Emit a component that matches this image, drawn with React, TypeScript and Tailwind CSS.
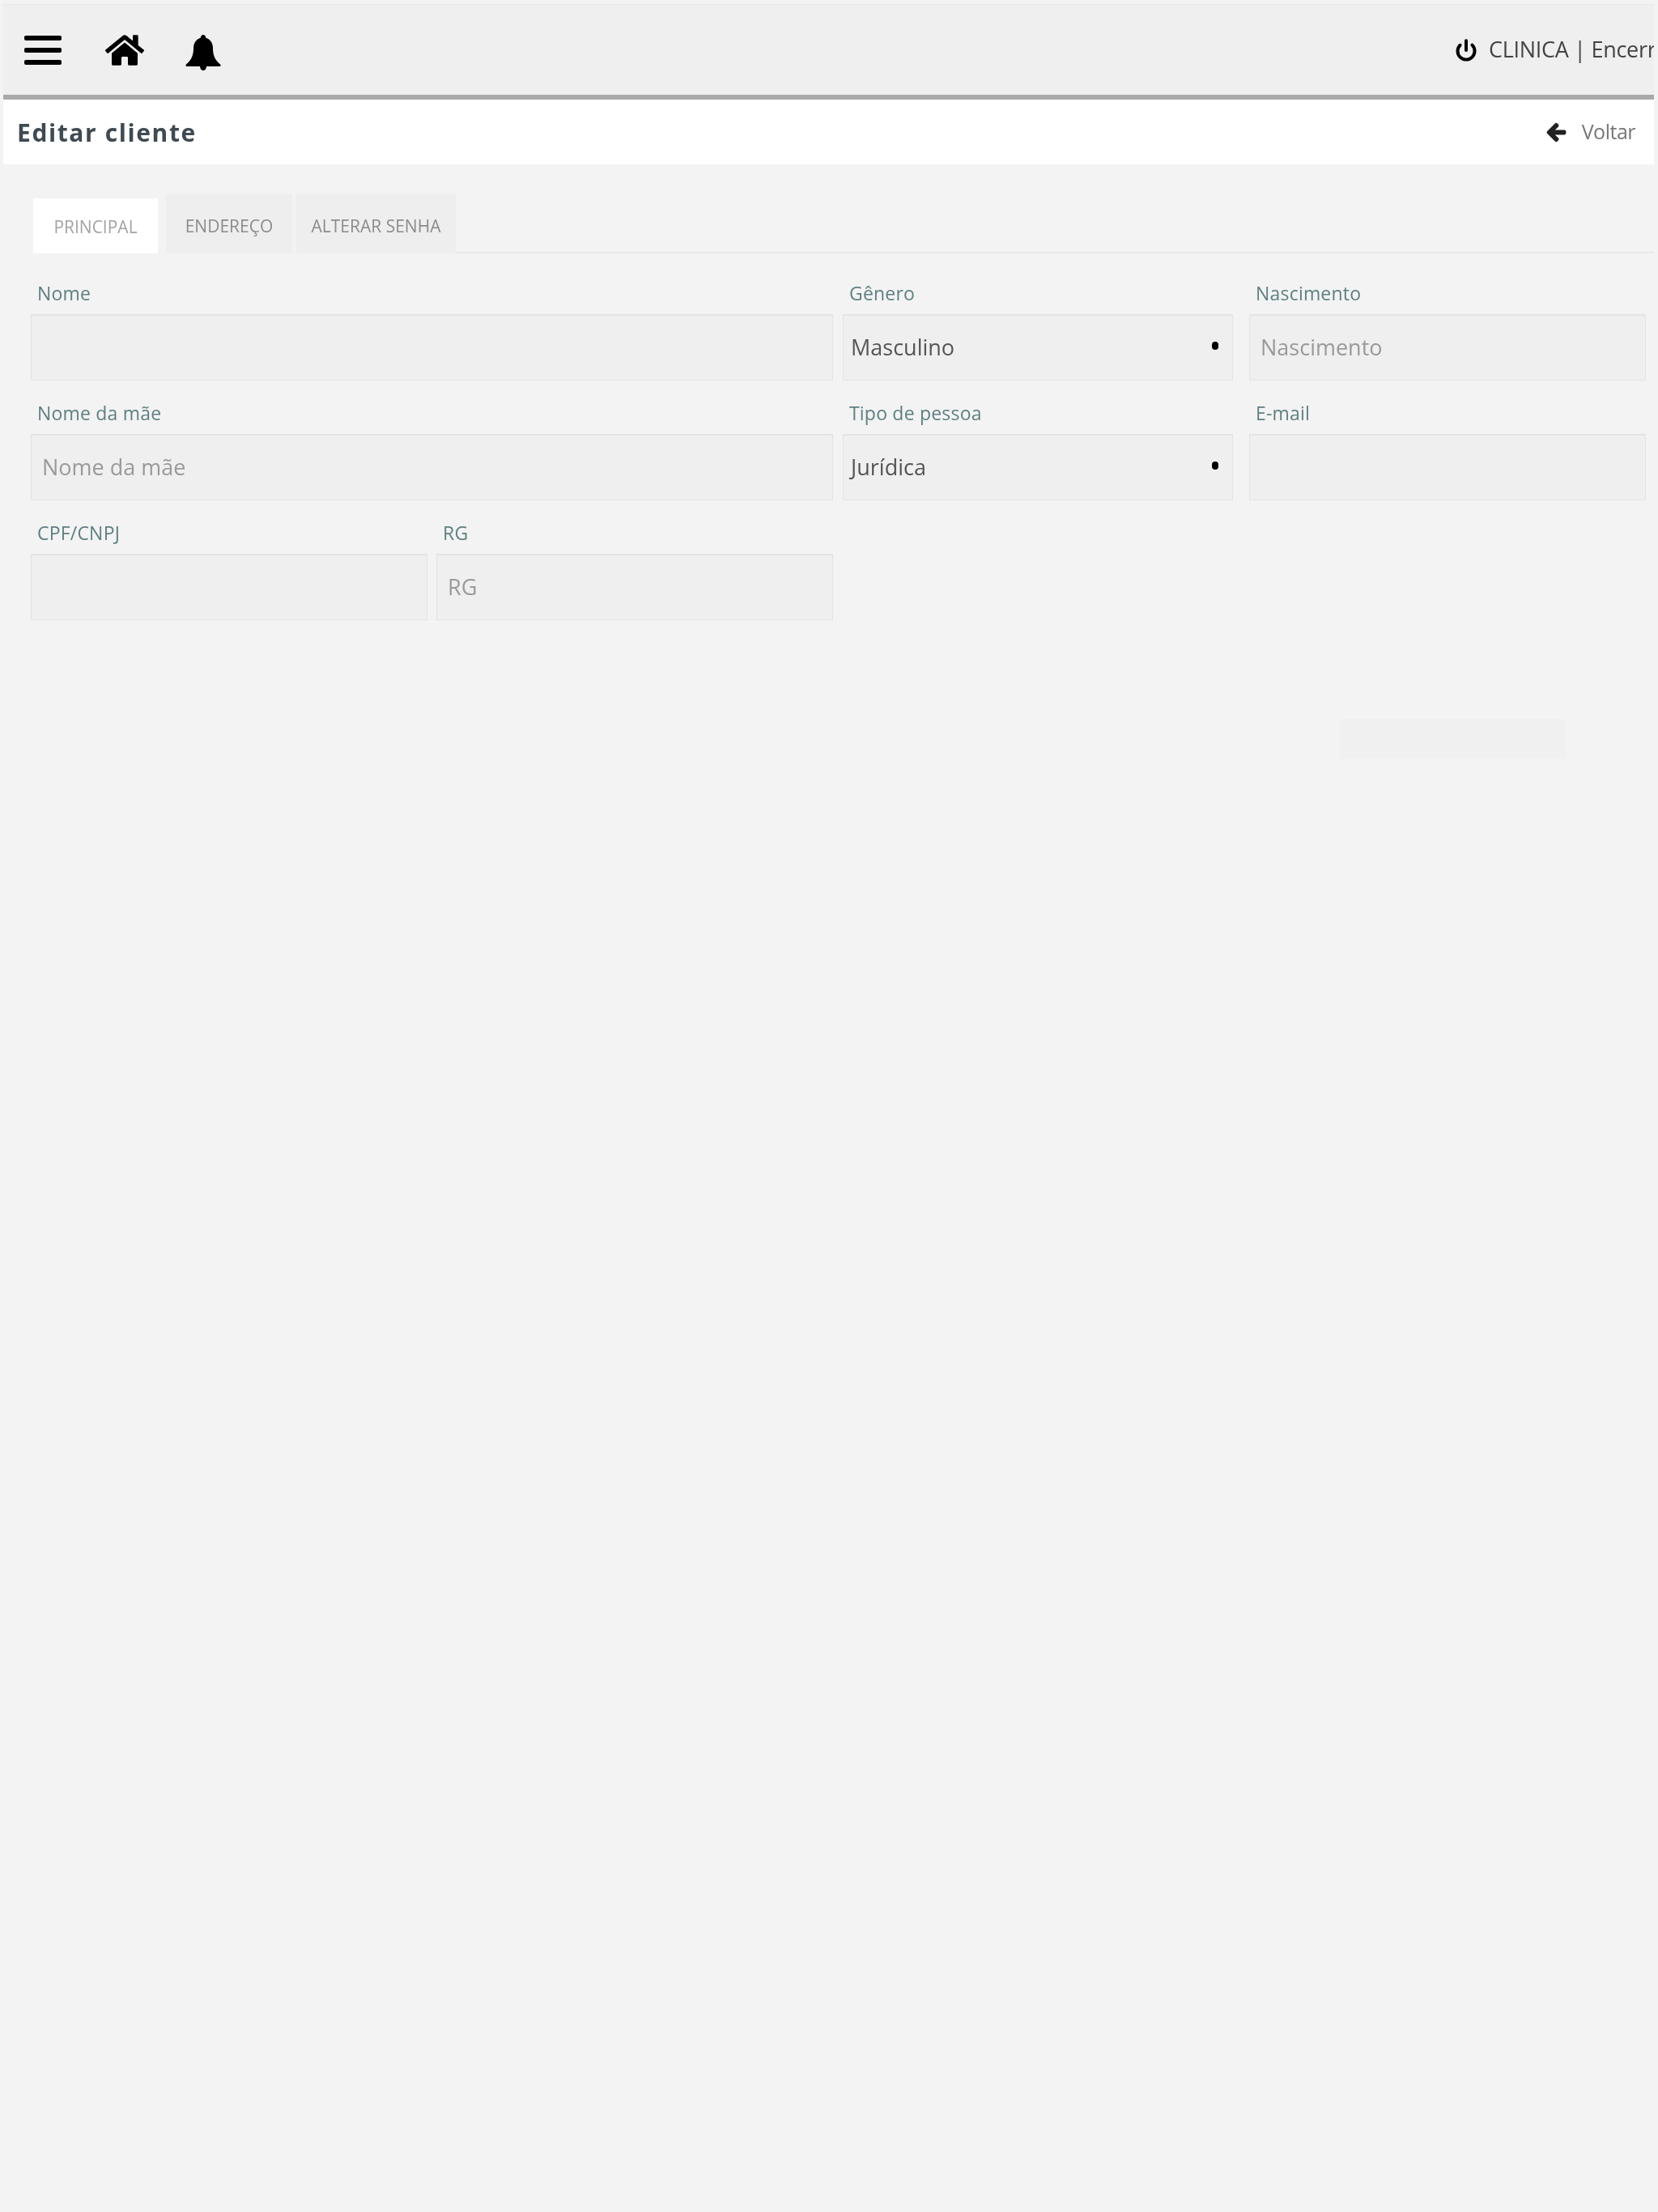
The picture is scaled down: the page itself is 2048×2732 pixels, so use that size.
import { FaHome, FaArrowLeft } from "react-icons/fa";
import { Power } from "lucide-react";

const font = { fontFamily: '"Open Sans", sans-serif' };

function Label({ text }: { text: string }) {
  return <label className="block h-[50px] pl-[8px] pt-[11px] text-[23px] leading-[26px] tracking-[0.2px] text-[#5f7f82]">{text}</label>;
}

function Input({ label, placeholder, className }: { label: string; placeholder?: string; className: string }) {
  return (
    <div className={className}>
      <Label text={label} />
      <div className="flex h-[82px] items-center border border-[#e3e3e3] border-t-2 bg-[#efefef] pl-[13px] text-[27px] text-[#9a9a9a]">
        {placeholder}
      </div>
    </div>
  );
}

function Select({ label, value, className }: { label: string; value: string; className: string }) {
  return (
    <div className={className}>
      <Label text={label} />
      <div className="flex h-[82px] items-center justify-between border border-[#e3e3e3] border-t-2 bg-[#efefef] pl-[9px] pr-[17px] text-[27px] text-[#555555]">
        <span>{value}</span>
        <span className="mb-[6px] h-[10px] w-[8px] rounded-full bg-black" />
      </div>
    </div>
  );
}

export default function App() {
  return (
    <div className="min-h-[2732px] bg-[#f3f3f3] pl-[4px] pr-[5px] pt-[5px] blur-[0.6px]" style={font}>
      {/* top bar */}
      <div className="flex h-[118px] items-center justify-between overflow-hidden border-b-[6px] border-t border-[#a9a9a9] border-t-[#e8e8e8] bg-[#efefef] pl-[26px]">
        <div className="flex items-center">
          <svg viewBox="0 0 46 38" className="mt-[3px] h-[38px] w-[46px]">
            <rect x="0" y="0" width="46" height="6" rx="2" />
            <rect x="0" y="15" width="46" height="6" rx="2" />
            <rect x="0" y="30" width="46" height="6" rx="2" />
          </svg>
          <FaHome className="ml-[54px] h-[48px] w-[48px] text-black" />
          <svg viewBox="0 0 44 44" className="ml-[51px] mt-[6px] h-[44px] w-[44px]">
            <path d="M22 0c2 0 3 1.500 3 3.500c6 2 9 7 9 13c0 8 2 14 9 20c1 1 .5 2.500-1 2.500L2 39c-1.500 0-2-1.500-1-2.500c7-6 9-12 9-20c0-6 3-11 9-13C19 1.500 20 0 22 0Z" />
            <path d="M18 39h8c0 3-2 5-4 5s-4-2-4-5Z" />
          </svg>
        </div>
        <div className="flex shrink-0 items-center whitespace-nowrap text-[27px] tracking-[-0.3px] text-[#444444]">
          <Power className="mr-[14px] h-[28px] w-[28px] text-black" strokeWidth={3.4} />
          <span className="w-[204px] overflow-hidden">CLINICA | Encerrar</span>
        </div>
      </div>

      {/* title bar */}
      <div className="flex h-[80px] items-center justify-between bg-white pl-[17px] pr-[23px]">
        <h1 className="text-[30px] font-bold tracking-[1.6px] text-[#3f4a52]">Editar cliente</h1>
        <div className="flex items-center text-[25px] tracking-[-0.5px] text-[#777777]">
          <FaArrowLeft className="mr-[19px] h-[25px] w-[25px] text-[#222222]" stroke="currentColor" strokeWidth={40} />
          Voltar
        </div>
      </div>

      {/* tabs */}
      <div className="mt-[37px] flex h-[73px] items-end pl-[37px]">
        <div className="flex h-[68px] w-[154px] items-center justify-center bg-white pt-[4px] text-[21px] text-[#a3a3a3]">PRINCIPAL</div>
        <div className="ml-[10px] flex h-[73px] w-[156px] items-center justify-center bg-[#eeeeee] pt-[6px] text-[21px] text-[#8c8c8c]">ENDEREÇO</div>
        <div className="ml-[5px] flex h-[73px] w-[197px] items-center justify-center bg-[#eeeeee] pt-[6px] text-[21px] text-[#8c8c8c]">ALTERAR SENHA</div>
        <div className="h-[2px] flex-1 bg-[#e9e9e9]" />
      </div>

      {/* form */}
      <div className="mr-[5px] pl-[34px] pt-[25px]">
        <div className="flex">
          <Input label="Nome" className="w-[991px]" />
          <Select label="Gênero" value="Masculino" className="ml-[12px] w-[482px]" />
          <Input label="Nascimento" placeholder="Nascimento" className="ml-[20px] w-[490px]" />
        </div>
        <div className="mt-[16px] flex">
          <Input label="Nome da mãe" placeholder="Nome da mãe" className="w-[991px]" />
          <Select label="Tipo de pessoa" value="Jurídica" className="ml-[12px] w-[482px]" />
          <Input label="E-mail" className="ml-[20px] w-[490px]" />
        </div>
        <div className="mt-[16px] flex">
          <Input label="CPF/CNPJ" className="w-[490px]" />
          <Input label="RG" placeholder="RG" className="ml-[11px] w-[490px]" />
        </div>
        <div className="mt-[122px] ml-[1617px] h-[49px] w-[278px] bg-[#f0f0f0]" />
      </div>
    </div>
  );
}
